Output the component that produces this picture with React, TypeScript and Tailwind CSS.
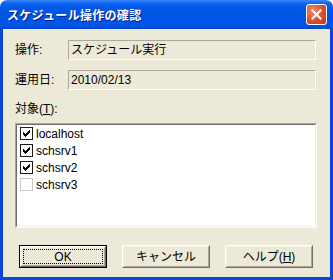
import React from 'react';

const font = { fontFamily: '"Liberation Sans", "Noto Sans CJK JP", sans-serif' };

const CheckBox = ({ checked }: { checked: boolean }) => {
  const cols = [
    [3, 5], [4, 6], [5, 7], [6, 6], [7, 5], [8, 4], [9, 3],
  ];
  return (
    <svg width="13" height="13" viewBox="0 0 13 13" shapeRendering="crispEdges" className="shrink-0">
      <rect x="0.5" y="0.5" width="12" height="12" fill="#fff" stroke={checked ? '#1c1c1c' : '#c8c8c8'} />
      {checked && cols.map(([x, y]) => <rect key={x} x={x} y={y} width="1" height="3" fill="#000" />)}
    </svg>
  );
};

const Field = ({ value }: { value: string }) => (
  <div className="flex-1 h-[20px] border border-t-[#aca899] border-l-[#aca899] border-b-white border-r-white bg-[#ece9d8] pl-[2px] flex items-center text-[12px] text-black">
    {value}
  </div>
);

const Button = ({ children, isDefault }: { children: React.ReactNode; isDefault?: boolean }) => (
  <div className={`w-[88px] h-[23px] ${isDefault ? 'border border-black' : ''}`}>
    <div className="w-full h-full border border-t-white border-l-white border-b-[#716f64] border-r-[#716f64] bg-[#ece9d8]">
      <div className="w-full h-full border border-t-[#f1efe2] border-l-[#f1efe2] border-b-[#aca899] border-r-[#aca899] flex items-center justify-center p-[1px]">
        <div className={`w-full h-full flex items-center justify-center text-[12px] text-black ${isDefault ? 'border border-dotted border-black' : ''}`}>
          {children}
        </div>
      </div>
    </div>
  </div>
);

const items = [
  { name: 'localhost', checked: true },
  { name: 'schsrv1', checked: true },
  { name: 'schsrv2', checked: true },
  { name: 'schsrv3', checked: false },
];

export default function App() {
  return (
    <div className="w-[333px] h-[280px] flex flex-col bg-white" style={font}>
      <div className="h-[29px] shrink-0 rounded-t-[7px] flex items-center justify-between pl-[7px] pr-[6px] bg-[linear-gradient(to_bottom,#3c8cfc_0%,#1466f0_10%,#0058e8_25%,#0054e3_55%,#0056ec_85%,#0046c8_100%)]">
        <span className="text-white font-bold text-[12px] tracking-[0.3px] pt-[2px] [text-shadow:1px_1px_0_#0a1a7a]">
          スケジュール操作の確認
        </span>
        <div className="w-[21px] h-[21px] rounded-[3px] border border-white bg-[radial-gradient(circle_at_30%_30%,#f08a6e,#d9502c_55%,#c0381a)] flex items-center justify-center">
          <svg width="11" height="11" viewBox="0 0 11 11">
            <path d="M1.5 1.5 L9.5 9.5 M9.5 1.5 L1.5 9.5" stroke="#fff" strokeWidth="2.2" strokeLinecap="square" />
          </svg>
        </div>
      </div>
      <div className="flex-1 flex flex-col border-x-[3px] border-b-[3px] border-[#0a45dc] bg-[#ece9d8] pl-[12px] pr-[14px] pt-[11px]">
        <div className="flex items-center h-[20px]">
          <span className="w-[53px] text-[12px] text-black">操作:</span>
          <Field value="スケジュール実行" />
        </div>
        <div className="flex items-center h-[20px] mt-[10px]">
          <span className="w-[53px] text-[12px] text-black">運用日:</span>
          <Field value="2010/02/13" />
        </div>
        <div className="mt-[12px] h-[14px] leading-[14px] text-[12px] text-black">
          対象(<span className="underline">T</span>):
        </div>
        <div className="mt-[7px] w-[302px] h-[105px] border border-t-[#aca899] border-l-[#aca899] border-b-white border-r-white">
          <div className="w-full h-full border border-t-[#716f64] border-l-[#716f64] border-b-[#f1efe2] border-r-[#f1efe2] bg-white flex flex-col">
            {items.map((it) => (
              <div key={it.name} className="h-[17px] flex items-center pl-[3px] gap-[3px] text-[12px] text-black">
                <CheckBox checked={it.checked} />
                <span>{it.name}</span>
              </div>
            ))}
          </div>
        </div>
        <div className="mt-[17px] flex gap-[15px] pl-[4px]">
          <Button isDefault>OK</Button>
          <Button>キャンセル</Button>
          <Button>
            ヘルプ(<span className="underline">H</span>)
          </Button>
        </div>
      </div>
    </div>
  );
}
